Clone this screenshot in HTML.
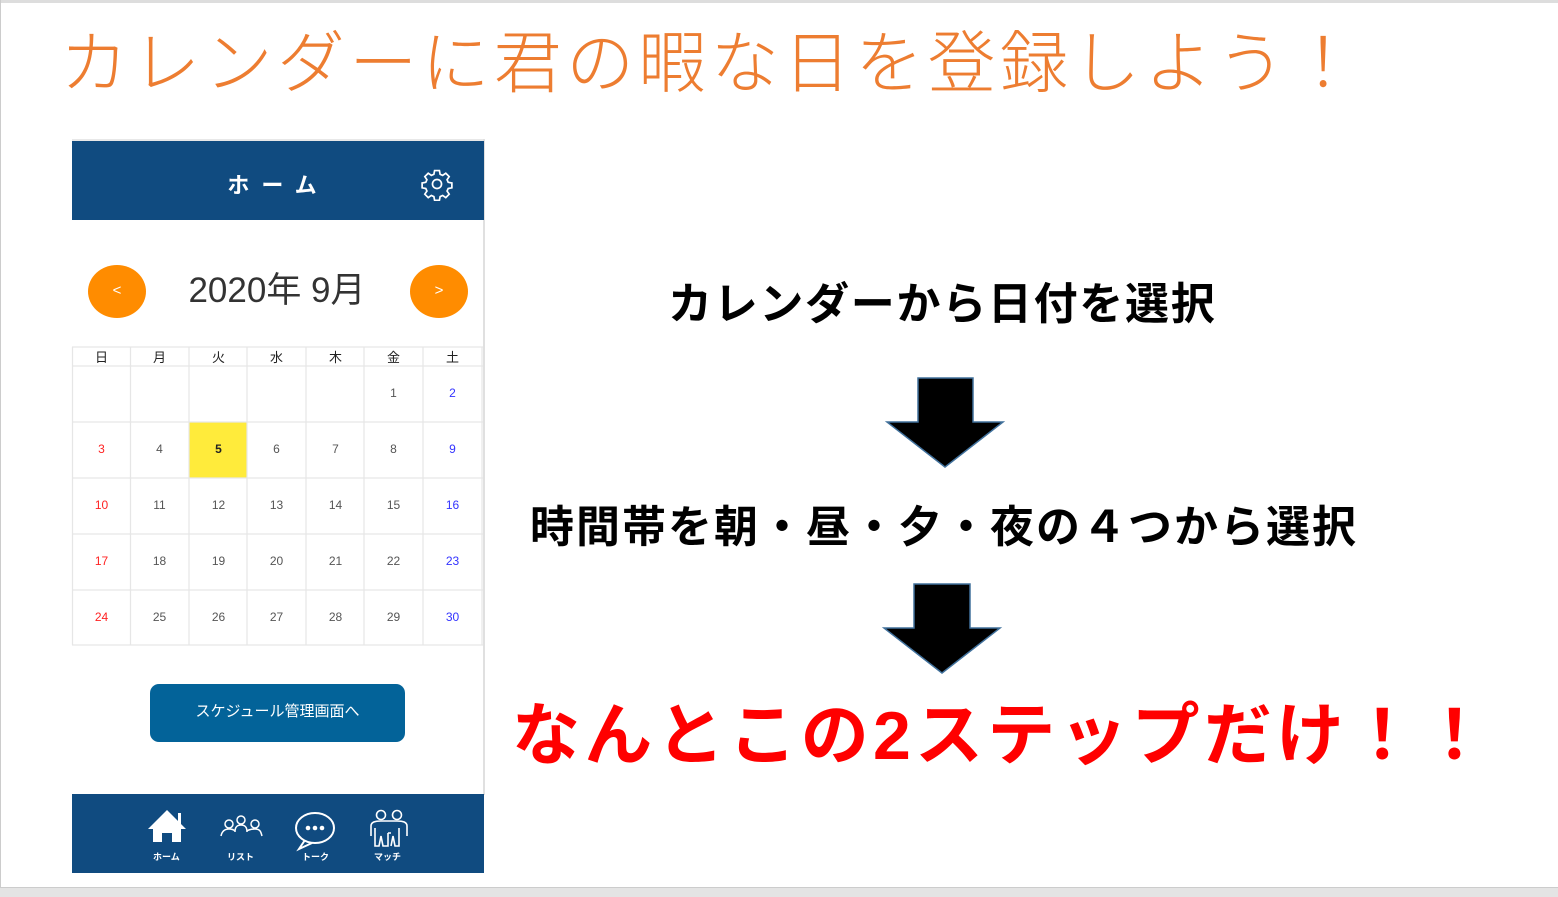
<!DOCTYPE html>
<html><head><meta charset="utf-8"><style>
*{margin:0;padding:0;box-sizing:border-box}
body{width:1558px;height:897px;background:#fff;position:relative;overflow:hidden;font-family:"Liberation Sans","Noto Sans CJK JP",sans-serif}
.abs{position:absolute}
.title{left:60px;top:20px;font-size:68px;color:#ed7d31;letter-spacing:4.3px;white-space:nowrap;line-height:88px;font-weight:300}
.cell{position:absolute;text-align:center;font-size:12px;color:#555}
.r{color:#f22}.b{color:#33f}
.t{font-weight:bold;color:#000;white-space:nowrap}
</style></head><body>
<div class="abs" style="left:0;top:0;width:1558px;height:3px;background:#ddd"></div>
<div class="abs" style="left:0;top:0;width:1px;height:897px;background:#ccc"></div>
<div class="abs" style="left:0;top:887px;width:1558px;height:10px;background:#e4e4e4;border-top:1px solid #ccc"></div>
<div class="abs title">カレンダーに君の暇な日を登録しよう！</div>

<div class="abs" style="left:72px;top:139px;width:413px;height:2px;background:#e8e8e8"></div>
<div class="abs" style="left:483px;top:139px;width:2px;height:656px;background:#e0e0e0"></div>
<div class="abs" style="left:72px;top:141px;width:412px;height:79px;background:#104b80"></div>
<div class="abs" style="left:72px;top:168px;width:412px;text-align:center;color:#fff;font-weight:bold;font-size:22px;letter-spacing:12px">ホーム</div>
<svg class="abs" style="left:420px;top:167px" width="34" height="34" viewBox="0 0 24 24" fill="none" stroke="#fff" stroke-width="1.2"><circle cx="12" cy="12" r="3.2"/><path d="M10.3 2.5h3.4l.5 2.6 1.8.8 2.2-1.5 2.4 2.4-1.5 2.2.8 1.8 2.6.5v3.4l-2.6.5-.8 1.8 1.5 2.2-2.4 2.4-2.2-1.5-1.8.8-.5 2.6h-3.4l-.5-2.6-1.8-.8-2.2 1.5-2.4-2.4 1.5-2.2-.8-1.8-2.6-.5v-3.4l2.6-.5.8-1.8-1.5-2.2 2.4-2.4 2.2 1.5 1.8-.8z"/></svg>

<div class="abs" style="left:88px;top:265px;width:58px;height:53px;border-radius:50%;background:#ff8c00;color:#fff;text-align:center;line-height:52px;font-size:15px">&lt;</div>
<div class="abs" style="left:410px;top:265px;width:58px;height:53px;border-radius:50%;background:#ff8c00;color:#fff;text-align:center;line-height:52px;font-size:15px">&gt;</div>
<div class="abs" style="left:150px;top:269px;width:254px;text-align:center;font-size:35px;color:#333;line-height:44px">2020年 9月</div>

<svg class="abs" style="left:0;top:0" width="490" height="650">
<rect x="189" y="422" width="58" height="56" fill="#ffeb3b"/>
<g stroke="#e6e6e6" stroke-width="1.2">
<line x1="72" y1="347" x2="483" y2="347"/><line x1="72" y1="366" x2="483" y2="366"/>
<line x1="72" y1="422" x2="483" y2="422"/><line x1="72" y1="478" x2="483" y2="478"/>
<line x1="72" y1="534" x2="483" y2="534"/><line x1="72" y1="590" x2="483" y2="590"/>
<line x1="72" y1="645" x2="483" y2="645"/>
<line x1="72.5" y1="347" x2="72.5" y2="645"/><line x1="130.5" y1="347" x2="130.5" y2="645"/>
<line x1="189" y1="347" x2="189" y2="645"/><line x1="247" y1="347" x2="247" y2="645"/>
<line x1="306" y1="347" x2="306" y2="645"/><line x1="364" y1="347" x2="364" y2="645"/>
<line x1="423" y1="347" x2="423" y2="645"/><line x1="482" y1="347" x2="482" y2="645"/>
</g></svg>
<div id="cal"></div>
<script>
var xs=[72,130,189,247,306,364,423],w=59,h='';
var hd=['日','月','火','水','木','金','土'];
for(var i=0;i<7;i++)h+='<div class="cell" style="left:'+xs[i]+'px;top:347px;width:'+w+'px;color:#222;font-size:13px">'+hd[i]+'</div>';
var d=1;
for(var r=0;r<5;r++)for(var c=0;c<7;c++){if(r==0&&c<5)continue;var cl=c==0?'r':c==6?'b':'';var st=d==5?'color:#222;font-weight:bold;':'';
h+='<div class="cell '+cl+'" style="'+st+'left:'+xs[c]+'px;top:'+(386+r*56)+'px;width:'+w+'px">'+d+'</div>';d++;}
document.getElementById('cal').innerHTML=h;
</script>

<div class="abs" style="left:150px;top:684px;width:255px;height:58px;border-radius:9px;background:#036399;color:#fff;text-align:center;line-height:56px;font-size:15px">スケジュール管理画面へ</div>

<div class="abs" style="left:72px;top:794px;width:412px;height:79px;background:#104b80"></div>
<svg class="abs" style="left:145px;top:808px" width="270" height="56" fill="none" stroke="#fff">
<path d="M22 2 L3 21 H8 V34 H17 V25 H27 V34 H36 V21 H41 L36 16 V5 H33 V13 Z" fill="#fff" stroke="none"/>
<g stroke-width="1.5"><circle cx="84" cy="16" r="4"/><circle cx="96" cy="12" r="4"/><circle cx="110" cy="16" r="4"/><path d="M76 28c1-5 4-7 8-7s6 2 6 2M90 24c0-5 2-7 6-7s6 2 6 7M102 23s2-2 8-2 6 4 7 7"/></g>
<ellipse cx="170" cy="20" rx="19" ry="15" stroke-width="2"/><path d="M160 32 L154 41 L167 35" stroke-width="2"/>
<circle cx="163" cy="20" r="2.3" fill="#fff" stroke="none"/><circle cx="170" cy="20" r="2.3" fill="#fff" stroke="none"/><circle cx="177" cy="20" r="2.3" fill="#fff" stroke="none"/>
<g stroke-width="1.6"><circle cx="236" cy="7" r="4.5"/><circle cx="252" cy="7" r="4.5"/><path d="M226 28v-10c0-4 4-5 10-5h16c6 0 10 1 10 5v10M230 20v18h4l2-10 2 10h5v-13M254 20v18h-4l-2-10-2 10M243 25l3 0"/></g>
</svg>
<div class="abs" style="left:145px;top:850px;width:270px;font-size:9px;color:#fff;font-weight:bold">
<span class="abs" style="left:8px">ホーム</span><span class="abs" style="left:82px">リスト</span><span class="abs" style="left:157px">トーク</span><span class="abs" style="left:229px">マッチ</span></div>

<div class="abs t" style="left:668px;top:279px;font-size:44px;line-height:52px;letter-spacing:1.7px">カレンダーから日付を選択</div>
<div class="abs t" style="left:530px;top:502px;font-size:44px;line-height:52px;letter-spacing:2px">時間帯を朝・昼・夕・夜の４つから選択</div>
<div class="abs t" style="left:512px;top:696px;font-size:68px;line-height:80px;color:#f00;letter-spacing:4.2px">なんとこの2ステップだけ！！</div>

<svg class="abs" style="left:0;top:0" width="1100" height="700">
<path d="M918 378H973V422H1003L945 467L887 422H918Z" fill="#000" stroke="#41719c" stroke-width="1.5"/>
<path d="M914 584H970V628H1000L942 673L884 628H914Z" fill="#000" stroke="#41719c" stroke-width="1.5"/>
</svg>
</body></html>
